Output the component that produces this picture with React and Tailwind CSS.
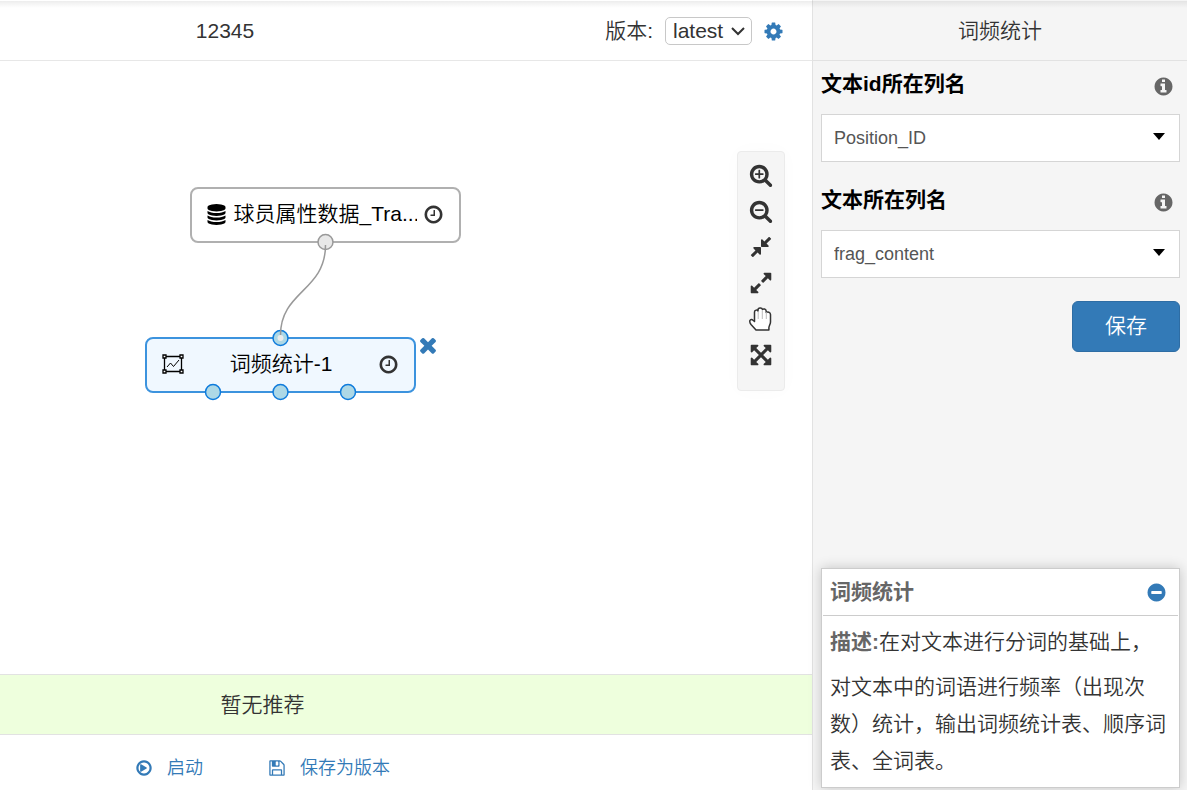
// App.jsx
import React, { useState } from "react";

const RING =
  "M1440 896q0-148-73-273t-198-198-273-73-273 73-198 198-73 273 73 273 198 198 273 73 273-73 198-198 73-273z";
const DISC =
  "M1664 896q0 209-103 385.5t-279.5 279.5-385.5 103-385.5-103-279.5-279.5-103-385.5 103-385.5 279.5-279.5 385.5-103 385.5 103 279.5 279.5 103 385.5z";
const LENS =
  "M1216 832q0-185-131.500-316.500t-316.500-131.500-316.500 131.500-131.500 316.500 131.500 316.500 316.500 131.500 316.500-131.500 131.500-316.500zm512 832q0 53-37.500 90.500t-90.500 37.500q-54 0-90-38l-343-342q-179 124-399 124-143 0-273.500-55.500t-225-150-150-225-55.500-273.500 55.500-273.500 150-225 225-150 273.500-55.500 273.500 55.500 225 150 150 225 55.500 273.500q0 220-124 399l343 343q37 37 37 90z";

const ICONS = {
  cog: "M1152 896q0-106-75-181t-181-75-181 75-75 181 75 181 181 75 181-75 75-181zm512-109v222q0 12-8 23t-20 13l-185 28q-19 54-39 91 35 50 107 138 10 12 10 25t-9 23q-27 37-99 108t-94 71q-12 0-26-9l-138-108q-44 23-91 38-16 136-29 186-7 28-36 28h-222q-14 0-24.500-8.500t-11.500-21.500l-28-184q-49-16-90-37l-141 107q-10 9-25 9-14 0-25-11-126-114-165-168-7-10-7-23 0-12 8-23 15-21 51-66.500t54-70.500q-27-50-41-99l-183-27q-13-2-21-12.500t-8-23.500v-222q0-12 8-23t19-13l186-28q14-46 39-92-40-57-107-138-10-12-10-24 0-10 9-23 26-36 98.500-107.500t94.500-71.500q13 0 26 10l138 107q44-23 91-38 16-136 29-186 7-28 36-28h222q14 0 24.500 8.500t11.500 21.500l28 184q49 16 90 37l142-107q9-9 24-9 13 0 25 10 129 119 165 170 7 8 7 22 0 12-8 23-15 21-51 66.500t-54 70.500q26 50 41 98l183 28q13 2 21 12.500t8 23.500z",
  times:
    "M1490 1322q0 40-28 68l-136 136q-28 28-68 28t-68-28l-294-294-294 294q-28 28-68 28t-68-28l-136-136q-28-28-28-68t28-68l294-294-294-294q-28-28-28-68t28-68l136-136q28-28 68-28t68 28l294 294 294-294q28-28 68-28t68 28l136 136q28 28 28 68t-28 68l-294 294 294 294q28 28 28 68z",
  clock:
    "M1024 544v448q0 14-9 23t-23 9h-320q-14 0-23-9t-9-23v-64q0-14 9-23t23-9h224v-352q0-14 9-23t23-9h64q14 0 23 9t9 23z",
  database:
    "M896 768q237 0 443-43t325-127v170q0 69-103 128t-280 93.500-385 34.500-385-34.500-280-93.500-103-128v-170q119 84 325 127t443 43zm0 768q237 0 443-43t325-127v170q0 69-103 128t-280 93.500-385 34.500-385-34.500-280-93.500-103-128v-170q119 84 325 127t443 43zm0-384q237 0 443-43t325-127v170q0 69-103 128t-280 93.500-385 34.500-385-34.500-280-93.500-103-128v-170q119 84 325 127t443 43zm0-1152q208 0 385 34.500t280 93.500 103 128v128q0 69-103 128t-280 93.500-385 34.500-385-34.500-280-93.500-103-128v-128q0-69 103-128t280-93.500 385-34.500z",
  zoomIn:
    "M1088 800v64q0 13-9.500 22.500t-22.500 9.500h-224v224q0 13-9.500 22.500t-22.500 9.500h-64q-13 0-22.500-9.500t-9.500-22.500v-224h-224q-13 0-22.500-9.500t-9.500-22.500v-64q0-13 9.500-22.500t22.500-9.500h224v-224q0-13 9.500-22.500t22.500-9.500h64q13 0 22.500 9.500t9.500 22.500v224h224q13 0 22.500 9.500t9.500 22.500z",
  zoomOut:
    "M1088 800v64q0 13-9.500 22.500t-22.500 9.500h-576q-13 0-22.500-9.500t-9.500-22.500v-64q0-13 9.500-22.500t22.500-9.500h576q13 0 22.500 9.500t9.500 22.500z",
  compress:
    "M896 960v448q0 26-19 45t-45 19-45-19l-144-144-332 332q-10 10-23 10t-23-10l-114-114q-10-10-10-23t10-23l332-332-144-144q-19-19-19-45t19-45 45-19h448q26 0 45 19t19 45zm755-672q0 13-10 23l-332 332 144 144q19 19 19 45t-19 45-45 19h-448q-26 0-45-19t-19-45v-448q0-26 19-45t45-19 45 19l144 144 332-332q10-10 23-10t23 10l114 114q10 10 10 23z",
  expand:
    "M883 1056q0 13-10 23l-332 332 144 144q19 19 19 45t-19 45-45 19h-448q-26 0-45-19t-19-45v-448q0-26 19-45t45-19 45 19l144 144 332-332q10-10 23-10t23 10l114 114q10 10 10 23zm781-864v448q0 26-19 45t-45 19-45-19l-144-144-332 332q-10 10-23 10t-23-10l-114-114q-10-10-10-23t10-23l332-332-144-144q-19-19-19-45t19-45 45-19h448q26 0 45 19t19 45z",
  arrows:
    "M1411 541l-355 355 355 355 144-144q29-31 70-14 39 17 39 59v448q0 26-19 45t-45 19h-448q-42 0-59-40-17-39 14-69l144-144-355-355-355 355 144 144q31 30 14 69-17 40-59 40h-448q-26 0-45-19t-19-45v-448q0-42 40-59 39-17 69 14l144 144 355-355-355-355-144 144q-19 19-45 19-12 0-24-5-40-17-40-59v-448q0-26 19-45t45-19h448q42 0 59 40 17 39-14 69l-144 144 355 355 355-355-144-144q-31-30-14-69 17-40 59-40h448q26 0 45 19t19 45v448q0 42-39 59-13 5-25 5-26 0-45-19z",
  info: "M1152 1376v-160q0-14-9-23t-23-9h-96v-512q0-14-9-23t-23-9h-320q-14 0-23 9t-9 23v160q0 14 9 23t23 9h96v320h-96q-14 0-23 9t-9 23v160q0 14 9 23t23 9h448q14 0 23-9t9-23zm-128-896v-160q0-14-9-23t-23-9h-192q-14 0-23 9t-9 23v160q0 14 9 23t23 9h192q14 0 23-9t9-23z",
  minus:
    "M1344 960v-128q0-26-19-45t-45-19h-768q-26 0-45 19t-19 45v128q0 26 19 45t45 19h768q26 0 45-19t19-45z",
  play: "M1184 896q0 37-32 55l-544 320q-15 9-32 9-16 0-32-8-32-19-32-56v-640q0-37 32-56 33-18 64 1l544 320q32 18 32 55z",
  floppy:
    "M512 1536h768v-384h-768v384zm896 0h128v-896q0-14-10-38.500t-20-34.500l-281-281q-10-10-34-20t-39-10v416q0 40-28 68t-68 28h-576q-40 0-68-28t-28-68v-416h-128v1280h128v-416q0-40 28-68t68-28h832q40 0 68 28t28 68v416zm-384-928v-320q0-13-9.500-22.500t-22.500-9.500h-192q-13 0-22.500 9.500t-9.500 22.500v320q0 13 9.500 22.500t22.500 9.500h192q13 0 22.500-9.500t9.500-22.500zm640 32v928q0 40-28 68t-68 28h-1344q-40 0-68-28t-28-68v-1344q0-40 28-68t68-28h928q40 0 88 20t76 48l280 280q28 28 48 76t20 88z",
};

// outlines that get combined with a shared circle
const BASE = {
  clock: RING + DISC,
  play: RING + DISC,
  info: DISC,
  minus: DISC,
  zoomIn: LENS,
  zoomOut: LENS,
};

function Icon({ name, className }) {
  return (
    <svg viewBox="0 0 1792 1792" className={className} fill="currentColor" fillRule="evenodd" aria-hidden="true">
      <path d={(BASE[name] || "") + ICONS[name]} />
    </svg>
  );
}

function HandIcon() {
  return (
    <svg viewBox="0 0 24 24" className="size-6" fill="#fff" stroke="#333" strokeWidth="1.5" strokeLinejoin="round" aria-hidden="true">
      <path d="M7 23 L2 17.500 C.9 16 .6 14.500 .9 13.500 C1.500 12.300 3 12.200 4 13.200 L5.500 14.500 V5 C5.500 2.800 8.500 2.500 9 4 V3 C9 .6 13 .4 13.500 2.500 C14.300 1.600 17 1.800 17.200 4 V5.500 C18.500 4.500 21.500 5 21.500 7.500 V15 C21.500 17 20.200 18.500 19.900 20.500 V23 Z" />
      <path d="M9.200 4.500V12M13.300 3.500V12M17.300 5V12" stroke="#bbb" strokeWidth="1" />
    </svg>
  );
}

// frame with corner handles and a line chart inside
function ModelIcon() {
  return (
    <svg viewBox="0 0 22 20" className="h-5 w-[22px]" fill="none" stroke="#000" strokeWidth="1.300" aria-hidden="true">
      <path d="M3 2.500h16M3 17.500h16M2.500 3v14M19.500 3v14" />
      <path d="M5 13l3.500-4 3 3.500L17 6" strokeWidth="1" />
      <path d="M1 1h3v3h-3zM18 1h3v3h-3zM1 16h3v3h-3zM18 16h3v3h-3z" fill="#fff" />
    </svg>
  );
}

const TOOLS = [
  ["zoomIn", "放大"],
  ["zoomOut", "缩小"],
  ["compress", "收缩"],
  ["expand", "展开"],
  ["hand", "拖动"],
  ["arrows", "全屏"],
];

function Toolbar() {
  return (
    <div className="absolute right-[27px] top-[90px] flex w-12 flex-col items-center gap-3 rounded border border-[#ebebeb] bg-[#f5f5f5] pb-[23px] pt-[11px] text-[#333] shadow-[0_0_20px_rgba(0,0,0,0.02)]">
      {TOOLS.map(([name, label]) => (
        <button key={name} type="button" aria-label={label} className="block size-6">
          {name === "hand" ? <HandIcon /> : <Icon name={name} className="size-6" />}
        </button>
      ))}
    </div>
  );
}

function Canvas() {
  return (
    <section className="relative min-h-[400px] flex-1 overflow-hidden text-black">
      {/* data node */}
      <div className="absolute left-[190px] top-[126px] flex h-14 w-[271px] items-center justify-between rounded-lg border-2 border-[#b0b0b0] bg-white pb-[2px] pl-[14px] pr-[15px]">
        <Icon name="database" className="size-[21px] shrink-0" />
        <span className="w-[183px] overflow-hidden whitespace-nowrap">球员属性数据_Tra...</span>
        <Icon name="clock" className="size-[21px] shrink-0 text-[#333]" />
      </div>

      {/* selected node */}
      <div className="absolute left-[145px] top-[276px] flex h-14 w-[271px] items-center justify-between rounded-lg border-2 border-[#3c93de] bg-[#f0f8ff] px-[15px] pb-[2px]">
        <ModelIcon />
        <span>词频统计-1</span>
        <Icon name="clock" className="size-[21px] text-[#333]" />
      </div>
      <button type="button" aria-label="删除" className="absolute left-[416px] top-[272px] text-[#337ab7]">
        <Icon name="times" className="size-6" />
      </button>

      {/* ports and the link between the nodes */}
      <svg className="pointer-events-none absolute left-0 top-0 h-[400px] w-[500px]" fill="none" aria-hidden="true">
        <circle cx="325.500" cy="181" r="7.500" fill="#e8e8e8" stroke="#999" strokeWidth="1.500" />
        <g fill="#add8e6" stroke="#0e7bdc" strokeWidth="1.500">
          <circle cx="280.500" cy="277" r="7.500" />
          <circle cx="213" cy="331" r="7.500" />
          <circle cx="280.500" cy="331" r="7.500" />
          <circle cx="348" cy="331" r="7.500" />
        </g>
        <circle cx="280.500" cy="277" r="3" fill="#ececec" />
        <path d="M325.500 184C325.500 230 280.500 230 280.500 274" stroke="#999" strokeWidth="1.500" />
      </svg>

      <Toolbar />
    </section>
  );
}

function Field({ id, label, value }) {
  return (
    <div className="mb-[15px]">
      <div className="mb-[7px] flex h-[46px] items-center justify-between pr-[6px]">
        <label htmlFor={id} className="font-bold text-black">{label}</label>
        <button type="button" aria-label="说明" className="mt-1 text-[#666]">
          <Icon name="info" className="size-[21px]" />
        </button>
      </div>
      <div className="relative">
        <select
          id={id}
          defaultValue={value}
          className="block h-12 w-full appearance-none border border-[#d5d5d5] bg-white px-3 text-lg text-[#555]"
        >
          <option>{value}</option>
        </select>
        <svg viewBox="0 0 12 7" className="pointer-events-none absolute right-[15px] top-[19px] h-[7px] w-3" aria-hidden="true">
          <path d="M0 0h12L6 7z" fill="#000" />
        </svg>
      </div>
    </div>
  );
}

export default function App() {
  const [isOpen, setIsOpen] = useState(true);

  return (
    <div
      lang="zh-CN"
      className="relative flex min-h-screen bg-white font-['Liberation_Sans','Noto_Sans_CJK_SC',sans-serif] text-[21px] font-[350] leading-[30px] text-[#333]"
    >
      {/* shadow left by the bar above */}
      <div className="pointer-events-none absolute inset-x-0 top-px z-10 h-[7px] bg-linear-to-b from-black/7 to-transparent" />

      <main className="flex min-w-0 flex-1 flex-col">
        <header className="flex h-[61px] items-center justify-between border-b border-[#e7e7e7] pr-7 pt-[2px]">
          <h1 className="w-[450px] text-center">12345</h1>
          <div className="flex items-center">
            <label htmlFor="version">版本:</label>
            <div className="relative ml-3">
              <select
                id="version"
                defaultValue="latest"
                className="block h-7 w-[87px] appearance-none rounded-[5px] border border-[#c8c8c8] bg-white pl-[7px] leading-6"
              >
                <option>latest</option>
              </select>
              <svg viewBox="0 0 14 9" className="pointer-events-none absolute right-[7px] top-[10px] h-[9px] w-[14px]" fill="none" aria-hidden="true">
                <path d="M1 1l6 6 6-6" stroke="#333" strokeWidth="2" />
              </svg>
            </div>
            <button type="button" aria-label="设置" className="ml-[11px] text-[#337ab7]">
              <Icon name="cog" className="size-[21px]" />
            </button>
          </div>
        </header>

        <Canvas />

        <div className="flex h-[61px] items-center border-y border-[#e2e2e2] bg-[#eeffdd]">
          <p className="w-[525px] text-center">暂无推荐</p>
        </div>

        <footer className="flex h-[55px] items-center gap-[65px] pl-[135px] pt-[10px] text-lg text-[#337ab7]">
          <button type="button" className="flex items-center gap-[14px]">
            <Icon name="play" className="size-[18px]" />
            启动
          </button>
          <button type="button" className="flex items-center gap-[14px]">
            <Icon name="floppy" className="size-[18px]" />
            保存为版本
          </button>
        </footer>
      </main>

      <aside className="flex w-[375px] shrink-0 flex-col border-l border-[#e2e2e2] bg-[#f5f5f5]">
        <h2 className="flex h-[61px] items-center justify-center border-b border-[#e2e2e2] pt-[2px]">词频统计</h2>

        <form className="pl-2 pr-[7px]" onSubmit={(e) => e.preventDefault()}>
          <Field id="text-id" label="文本id所在列名" value="Position_ID" />
          <Field id="text" label="文本所在列名" value="frag_content" />
          <button
            type="submit"
            className="ml-auto mt-[23px] block h-[51px] w-[108px] rounded-md border border-[#2e6da4] bg-[#337ab7] pb-[2px] text-white"
          >
            保存
          </button>
        </form>

        {/* component description */}
        <div className="mb-[2px] ml-2 mr-[7px] mt-auto border border-[#ccc] bg-white shadow-[0_0_12px_rgba(0,0,0,0.2)]">
          <div className="mx-px flex h-[47px] items-center justify-between border-b border-[#ccc] pl-[7px] pr-[11px]">
            <h3 className="font-bold text-[#666]">词频统计</h3>
            <button
              type="button"
              aria-label="折叠"
              aria-expanded={isOpen}
              onClick={() => setIsOpen((open) => !open)}
              className="text-[#337ab7]"
            >
              <Icon name="minus" className="size-[21px]" />
            </button>
          </div>
          {isOpen && (
            <p className="px-2 pb-2 leading-[37px]">
              <strong className="font-bold leading-[52px] text-[#666]">描述:</strong>
              在对文本进行分词的基础上，对文本中的词语进行频率（出现次数）统计，输出词频统计表、顺序词表、全词表。
            </p>
          )}
        </div>
      </aside>
    </div>
  );
}
